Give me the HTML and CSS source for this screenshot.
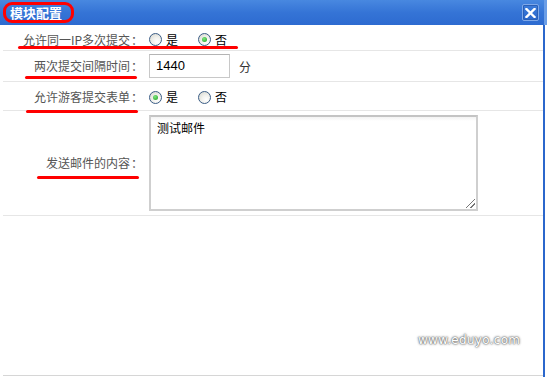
FILE: index.html
```html
<!DOCTYPE html>
<html lang="zh">
<head>
<meta charset="utf-8">
<title>模块配置</title>
<link rel="stylesheet" href="styles.css">
</head>
<body>
<div class="dialog">
  <div class="titlebar">
    <span class="title">模块配置</span>
    <span class="close" aria-label="关闭">
      <svg width="11" height="10" viewBox="0 0 11 10"><path d="M1.5 1 L9.5 9 M9.5 1 L1.5 9" stroke="#fff" stroke-width="2.4" stroke-linecap="square"/></svg>
    </span>
    <span class="mark mark-title"></span>
  </div>
  <div class="body">
    <div class="form">
      <div class="row row1">
        <div class="label">允许同一IP多次提交<span class="colon">：</span></div>
        <div class="value">
          <span class="radio"></span><span class="opt">是</span>
          <span class="radio checked"></span><span class="opt">否</span>
        </div>
      </div>
      <div class="row row2">
        <div class="label">两次提交间隔时间<span class="colon">：</span></div>
        <div class="value">
          <span class="input">1440</span><span class="unit">分</span>
        </div>
      </div>
      <div class="row row3">
        <div class="label">允许游客提交表单<span class="colon">：</span></div>
        <div class="value">
          <span class="radio checked"></span><span class="opt">是</span>
          <span class="radio"></span><span class="opt">否</span>
        </div>
      </div>
      <div class="row row4">
        <div class="label">发送邮件的内容<span class="colon">：</span></div>
        <div class="value">
          <div class="textarea">测试邮件<span class="grip"></span></div>
        </div>
      </div>
    </div>
    <div class="watermark">www.eduyo.com</div>
    <span class="mark line1"></span>
    <span class="mark line2"></span>
    <span class="mark line3"></span>
    <span class="mark line4"></span>
  </div>
</div>
</body>
</html>
```
FILE: styles.css
```css
* { box-sizing: border-box; }
html, body { margin: 0; padding: 0; background: #fff; }
body {
  width: 547px;
  height: 377px;
  overflow: hidden;
  font-family: "Noto Sans CJK SC", "Liberation Sans", sans-serif;
  font-size: 12px;
  color: #000;
}
.dialog { width: 547px; height: 377px; display: flex; flex-direction: column; }
.titlebar {
  position: relative;
  height: 25px;
  flex: none;
  background: linear-gradient(#4888e0, #3574d6 50%, #2d6bd0);
  display: flex;
  align-items: center;
  justify-content: space-between;
  padding: 0 5px 0 10px;
  border-right: 3px solid #6a9de6;
}
.title {
  color: #fff;
  font-weight: bold;
  font-size: 13px;
  line-height: 25px;
}
.close {
  width: 17px;
  height: 17px;
  border: 1px solid #7fa8e8;
  border-radius: 2px;
  background: linear-gradient(#3c7cda, #2b67cc);
  box-shadow: inset 0 0 0 1px #2a5fb6;
  display: flex;
  align-items: center;
  justify-content: center;
}
.close svg { display: block; }
.body {
  position: relative;
  flex: 1;
  width: 545px;
  border-right: 2px solid #2b67cc;
  padding: 3px 0 0 3px;
  display: flex;
  flex-direction: column;
}
.body::after {
  content: "";
  position: absolute;
  left: 3px;
  right: 0;
  bottom: 1px;
  height: 1px;
  background: #d6d6d6;
}
.form { display: flex; flex-direction: column; width: 540px; }
.row {
  display: grid;
  grid-template-columns: 138px 1fr;
  column-gap: 8px;
  align-items: center;
  border-bottom: 1px solid #e6e6e6;
}
.row1 { height: 23px; }
.row2 { height: 31px; }
.row3 { height: 29px; }
.row4 { height: 105px; }
.label {
  text-align: right;
  color: #555;
  white-space: nowrap;
  line-height: 16px;
}
.colon {
  display: inline-block;
  width: 10px;
  text-align: center;
  margin-left: 1px;
}
.row1 .label, .row1 .value { padding-top: 1px; }
.row3 .label, .row3 .value { padding-top: 2px; }
.value { display: flex; align-items: center; }
.radio {
  width: 13px;
  height: 13px;
  border-radius: 50%;
  border: 1px solid #3b5d86;
  background: radial-gradient(circle at 65% 70%, #fff 0, #f2f2ee 40%, #d4d4cc 100%);
  display: inline-flex;
  align-items: center;
  justify-content: center;
  flex: none;
}
.radio.checked::before {
  content: "";
  width: 5px;
  height: 5px;
  border-radius: 50%;
  background: radial-gradient(circle at 40% 35%, #7ee67e, #1e9e22);
}
.opt { margin-left: 4px; margin-right: 20px; line-height: 16px; }
.input {
  width: 81px;
  height: 24px;
  border: 1px solid #c8c8c8;
  border-top-color: #b4b4b4;
  padding-left: 6px;
  font-family: "Liberation Sans", sans-serif;
  font-size: 13px;
  line-height: 22px;
  color: #000;
}
.unit { margin-left: 9px; color: #333; }
.textarea {
  position: relative;
  width: 329px;
  height: 96px;
  border: 2px solid #cfcfcf;
  border-top-color: #c4c4c4;
  background: linear-gradient(#f3f3f3, #fff 4px);
  padding: 3px 6px;
  line-height: 16px;
  color: #000;
}
.grip {
  position: absolute;
  right: 1px;
  bottom: 1px;
  width: 9px;
  height: 9px;
  background:
    linear-gradient(135deg, transparent 45%, #777 45%, #777 55%, transparent 55%) 0 0 / 9px 9px no-repeat,
    linear-gradient(135deg, transparent 70%, #777 70%, #777 80%, transparent 80%) 0 0 / 9px 9px no-repeat;
}
.watermark {
  position: absolute;
  left: 418px;
  top: 308px;
  font-family: "DejaVu Sans", sans-serif;
  font-size: 12px;
  letter-spacing: 0.3px;
  color: #fff;
  text-shadow: 0 0 2px #666, 0 0 3px #888, 0 0 1px #555;
}
.mark {
  position: absolute;
  background: #f00;
  border-radius: 2px;
  height: 3px;
}
.mark-title {
  left: 3px;
  top: 2px;
  width: 71px;
  height: 21px;
  background: transparent;
  border: 3px solid #f00;
  border-radius: 9px;
}
.line1 { left: 18px; top: 21px; width: 220px; }
.line2 { left: 25px; top: 51px; width: 112px; }
.line3 { left: 26px; top: 85px; width: 112px; }
.line4 { left: 37px; top: 151px; width: 102px; }
```
